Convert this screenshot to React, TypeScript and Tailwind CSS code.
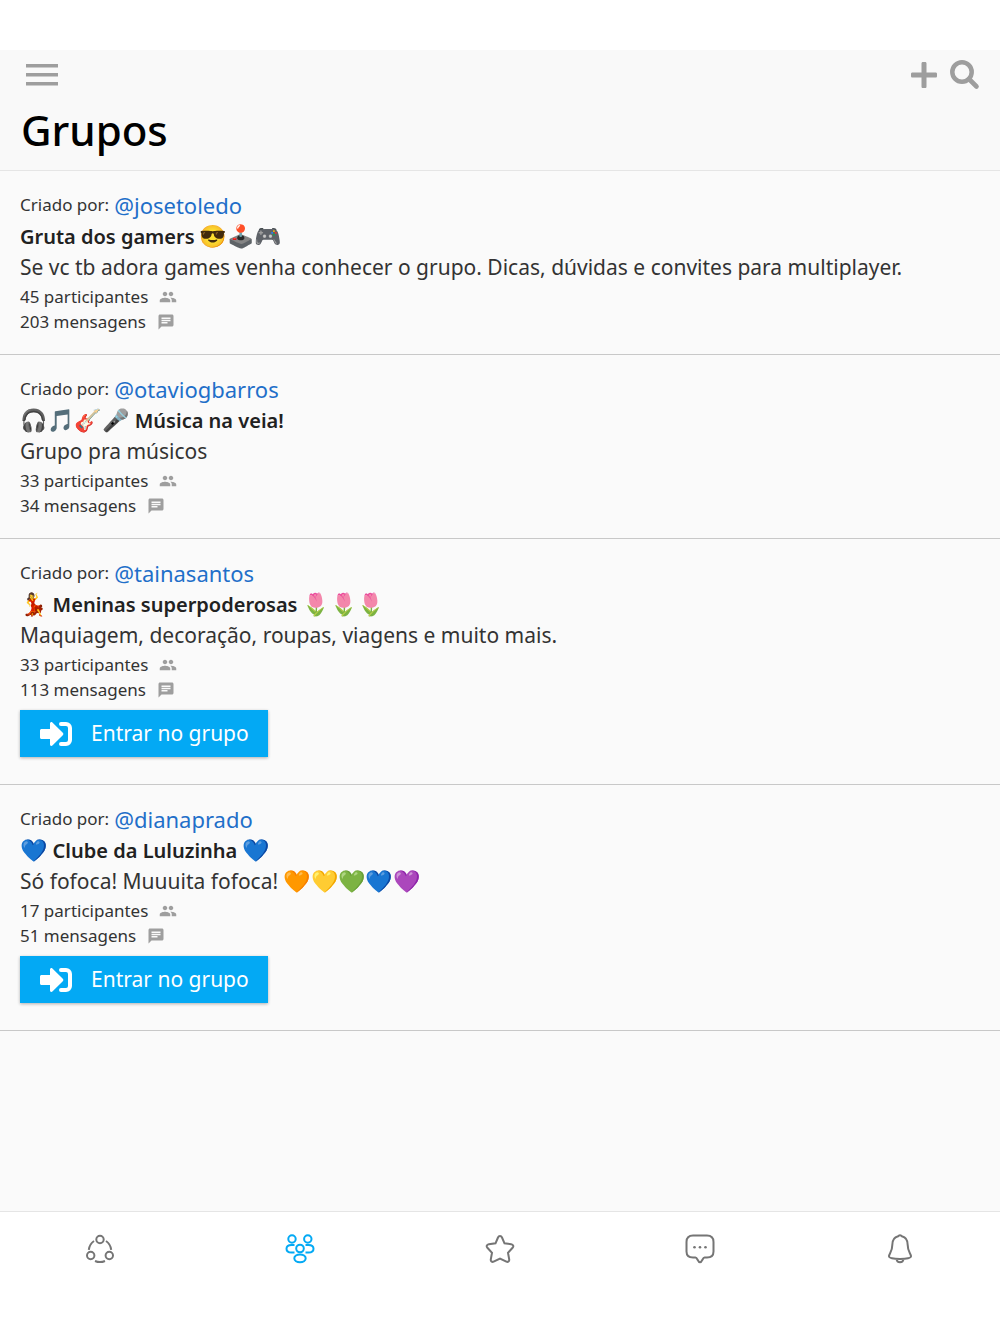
import type { ReactNode } from "react";

type Group = {
  owner: string;
  title: ReactNode;
  description: ReactNode;
  members: number;
  messages: number;
  canJoin?: boolean;
};

function Emoji({ children }: { children: string }) {
  return <span className="text-[22px] font-normal leading-none">{children}</span>;
}

const groups: Group[] = [
  {
    owner: "@josetoledo",
    title: <>Gruta dos gamers <Emoji>😎🕹️🎮</Emoji></>,
    description: "Se vc tb adora games venha conhecer o grupo. Dicas, dúvidas e convites para multiplayer.",
    members: 45,
    messages: 203,
  },
  {
    owner: "@otaviogbarros",
    title: <><Emoji>🎧🎵🎸🎤</Emoji> Música na veia!</>,
    description: "Grupo pra músicos",
    members: 33,
    messages: 34,
  },
  {
    owner: "@tainasantos",
    title: <><Emoji>💃</Emoji> Meninas superpoderosas <Emoji>🌷🌷🌷</Emoji></>,
    description: "Maquiagem, decoração, roupas, viagens e muito mais.",
    members: 33,
    messages: 113,
    canJoin: true,
  },
  {
    owner: "@dianaprado",
    title: <><Emoji>💙</Emoji> Clube da Luluzinha <Emoji>💙</Emoji></>,
    description: <>Só fofoca! Muuuita fofoca! <Emoji>🧡💛💚💙💜</Emoji></>,
    members: 17,
    messages: 51,
    canJoin: true,
  },
];

function PeopleIcon() {
  return (
    <svg viewBox="0 0 24 24" className="h-[18px] w-[18px] fill-[#9e9e9e]" aria-hidden="true">
      <path d="M16 11c1.660 0 2.990-1.340 2.990-3S17.660 5 16 5s-3 1.340-3 3 1.340 3 3 3zm-8 0c1.660 0 2.990-1.340 2.990-3S9.660 5 8 5 5 6.340 5 8s1.340 3 3 3zm0 2c-2.330 0-7 1.170-7 3.500V19h14v-2.500C15 14.170 10.330 13 8 13zm8 0c-.29 0-.62.02-.97.05 1.160.84 1.970 1.970 1.970 3.450V19h6v-2.500c0-2.330-4.670-3.500-7-3.500z" />
    </svg>
  );
}

function MessageIcon() {
  return (
    <svg viewBox="0 0 24 24" className="h-[18px] w-[18px] fill-[#9e9e9e]" aria-hidden="true">
      <path d="M20 2H4c-1.100 0-1.990.9-1.990 2L2 22l4-4h14c1.100 0 2-.9 2-2V4c0-1.100-.9-2-2-2zM6 9h12v2H6V9zm8 5H6v-2h8v2zm4-6H6V6h12v2z" />
    </svg>
  );
}

function SignInIcon() {
  return (
    <svg viewBox="0 0 32 26" className="h-[26px] w-8" aria-hidden="true">
      <path d="M1.500 8H10V2.500c0-1.300 1.500-2 2.400-1.100l10.400 10.300c.7.700.7 1.900 0 2.600L12.400 24.600c-.9.900-2.400.2-2.400-1.100V18H1.500C.7 18 0 17.300 0 16.500v-7C0 8.700.7 8 1.500 8z" fill="white" />
      <path d="M21 3H26a4 4 0 0 1 4 4v12a4 4 0 0 1-4 4h-5" fill="none" stroke="white" strokeWidth="4" strokeLinecap="round" />
    </svg>
  );
}

function GroupItem({ group }: { group: Group }) {
  return (
    <li className="border-b border-[#c8c8c8] px-5 pt-[18px] pb-5 text-[#333]">
      <p className="flex h-8 items-center gap-[5px] text-[17px]">
        <span>Criado por:</span>
        <a href="#perfil" className="text-[22px] text-[#1f6fc9]">{group.owner}</a>
      </p>
      <h2 className="h-8 text-[20px] font-semibold leading-8 text-[#212121]">{group.title}</h2>
      <p className="min-h-7 text-[21px] leading-7">{group.description}</p>
      <p className="mt-[3px] flex items-center gap-[11px] text-[17px] leading-[25px]">
        {group.members} participantes <PeopleIcon />
      </p>
      <p className="flex items-center gap-[11px] text-[17px] leading-[25px]">
        {group.messages} mensagens <MessageIcon />
      </p>
      {group.canJoin && (
        <button
          type="button"
          className="mt-2 mb-[7px] flex h-[47px] items-center gap-[19px] bg-[#03a9f4] pr-[19px] pl-5 text-[21px] text-white shadow-[0_1px_3px_rgba(0,0,0,0.3)]"
        >
          <SignInIcon />
          Entrar no grupo
        </button>
      )}
    </li>
  );
}

const navItems: { label: string; active?: boolean; icon: ReactNode }[] = [
  {
    label: "Início",
    icon: (
      <>
        <circle cx="15" cy="5.500" r="3.700" /><circle cx="5.700" cy="21.500" r="3.700" /><circle cx="24.300" cy="21.500" r="3.700" />
        <path d="M9 7A12.500 12.500 0 0 0 3.800 15.800M21 7A12.500 12.500 0 0 1 26.200 15.800M10 27A12.500 12.500 0 0 0 20 27" />
      </>
    ),
  },
  {
    label: "Grupos",
    active: true,
    icon: (
      <>
        <circle cx="7" cy="5" r="3.700" /><circle cx="22.800" cy="5" r="3.700" /><circle cx="15" cy="14.500" r="3.800" />
        <ellipse cx="15" cy="24.300" rx="5.700" ry="3.900" />
        <path d="M9.500 10.900H6.500C3.500 10.900 1.500 12.500 1.500 14.700s2 3.800 5 3.800h3M20.500 10.900h3c3 0 5 1.600 5 3.800s-2 3.800-5 3.800h-3" />
      </>
    ),
  },
  {
    label: "Favoritos",
    icon: <path d="M15 2c.9 0 1.600.6 2 1.500L19.500 9.300l6.700.9c2 .3 2.800 2 1.400 3.600l-4.600 4.900 1.200 6.700c.3 1.900-1.200 3-2.800 2.200L15 24.500l-6.400 3.100c-1.600.8-3.100-.3-2.800-2.200L7 18.700l-4.600-4.900c-1.400-1.600-.6-3.300 1.400-3.600l6.700-.9L13 3.500c.4-.9 1.100-1.500 2-1.500z" />,
  },
  {
    label: "Mensagens",
    icon: (
      <>
        <path d="M8 1.500h14c4.300 0 6.500 2.500 6.500 6.500v9.500c0 4-2.200 6-6.500 6h-2.500c-2 0-2.200 4.800-4.500 4.800s-2.500-4.800-4.500-4.800H8c-4.300 0-6.500-2-6.500-6V8c0-4 2.200-6.500 6.500-6.500z" />
        <g fill="currentColor" stroke="none"><circle cx="9.500" cy="13.300" r="1.300" /><circle cx="15" cy="13.300" r="1.300" /><circle cx="20.500" cy="13.300" r="1.300" /></g>
      </>
    ),
  },
  {
    label: "Notificações",
    icon: <path d="M15 1.300c-.8 0-1.500.3-1.900 1C8.800 3.300 7.300 7 7.300 11c0 6.500-2.900 8.300-3.300 11-.3 2.200 4.500 3 11 3s11.300-.8 11-3c-.4-2.700-3.300-4.500-3.300-11 0-4-1.500-7.700-5.800-8.700-.4-.7-1.100-1-1.900-1zM11.500 25c.2 2 1.500 3.300 3.500 3.300s3.300-1.300 3.500-3.300" />,
  },
];

export default function App() {
  return (
    <div className="flex min-h-screen flex-col bg-white pt-[50px] font-['Noto_Sans','Noto_Color_Emoji',sans-serif]">
      <header className="border-b border-[#e5e5e5] bg-[#f9f9f9] pb-2.5">
        <div className="flex h-[50px] items-center justify-between pr-5 pl-[26px]">
          <button type="button" aria-label="Menu">
            <svg viewBox="0 0 32 22" className="h-[22px] w-8 fill-[#9e9e9e]" aria-hidden="true">
              <path d="M0 0h32v3.500H0zM0 9h32v3.500H0zM0 18h32v3.500H0z" />
            </svg>
          </button>
          <div className="flex items-center gap-[13px] text-[#9e9e9e]">
            <button type="button" aria-label="Criar grupo">
              <svg viewBox="0 0 26 26" className="size-[26px] fill-current" aria-hidden="true">
                <path d="M12 0h2c1 0 1.500.5 1.500 1.500v9h9c1 0 1.500.5 1.500 1.500v2c0 1-.5 1.500-1.500 1.500h-9v9c0 1-.5 1.500-1.500 1.500h-2c-1 0-1.500-.5-1.500-1.500v-9h-9C.5 15.500 0 15 0 14v-2c0-1 .5-1.500 1.500-1.500h9v-9C10.500.5 11 0 12 0z" />
              </svg>
            </button>
            <button type="button" aria-label="Buscar">
              <svg viewBox="0 0 30 30" className="size-[30px] fill-none stroke-current" aria-hidden="true">
                <circle cx="12" cy="12" r="9.700" strokeWidth="4.500" />
                <path d="M19 19L26.500 26.500" strokeWidth="4.600" strokeLinecap="round" />
              </svg>
            </button>
          </div>
        </div>
        <h1 className="px-[21px] text-[42px] font-medium leading-[60px] text-black">Grupos</h1>
      </header>
      <main className="flex-1 bg-[#fafafa]">
        <ul>
          {groups.map((group) => <GroupItem key={group.owner} group={group} />)}
        </ul>
      </main>
      <nav aria-label="Principal" className="grid h-[123px] grid-cols-5 items-start border-t border-[#e5e5e5] bg-white pt-[22px]">
        {navItems.map((item) => (
          <button
            key={item.label}
            type="button"
            aria-label={item.label}
            aria-current={item.active ? "page" : undefined}
            className={item.active ? "flex justify-center text-[#03a9f4]" : "flex justify-center text-[#757575]"}
          >
            <svg viewBox="0 0 30 30" className="size-[30px] fill-none stroke-current stroke-2" aria-hidden="true">{item.icon}</svg>
          </button>
        ))}
      </nav>
    </div>
  );
}
